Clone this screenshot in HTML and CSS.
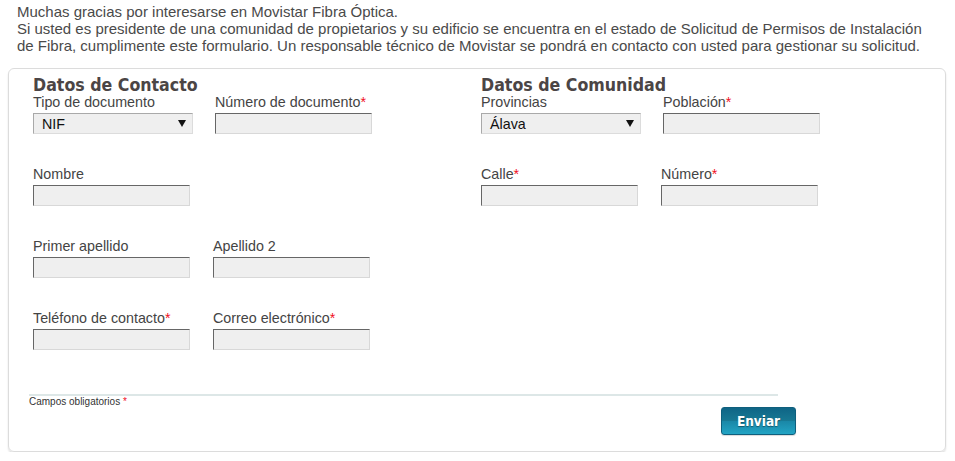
FILE: index.html
```html
<!DOCTYPE html>
<html lang="es">
<head>
<meta charset="utf-8">
<title>Movistar Fibra Óptica</title>
<link rel="stylesheet" href="styles.css">
</head>
<body>
<div class="intro">
  Muchas gracias por interesarse en Movistar Fibra Óptica.<br>
  Si usted es presidente de una comunidad de propietarios y su edificio se encuentra en el estado de Solicitud de Permisos de Instalación de Fibra, cumplimente este formulario. Un responsable técnico de Movistar se pondrá en contacto con usted para gestionar su solicitud.
</div>
<form class="card">
  <div class="columns">
    <section class="col">
      <h2 class="title">Datos de Contacto</h2>
      <div class="row">
        <div class="field field-wide">
          <label class="lbl">Tipo de documento</label>
          <div class="select">
            <span class="select-val">NIF</span>
            <svg class="arrow" width="8" height="7" viewBox="0 0 8 7"><path d="M0 0H8L4 7Z" fill="#111"/></svg>
          </div>
        </div>
        <div class="field">
          <label class="lbl">Número de documento<span class="req">*</span></label>
          <input class="inp" type="text">
        </div>
      </div>
      <div class="row">
        <div class="field">
          <label class="lbl">Nombre</label>
          <input class="inp" type="text">
        </div>
      </div>
      <div class="row">
        <div class="field">
          <label class="lbl">Primer apellido</label>
          <input class="inp" type="text">
        </div>
        <div class="field">
          <label class="lbl">Apellido 2</label>
          <input class="inp" type="text">
        </div>
      </div>
      <div class="row">
        <div class="field">
          <label class="lbl">Teléfono de contacto<span class="req">*</span></label>
          <input class="inp" type="text">
        </div>
        <div class="field">
          <label class="lbl">Correo electrónico<span class="req">*</span></label>
          <input class="inp" type="text">
        </div>
      </div>
    </section>
    <section class="col">
      <h2 class="title">Datos de Comunidad</h2>
      <div class="row">
        <div class="field field-wide">
          <label class="lbl">Provincias</label>
          <div class="select">
            <span class="select-val">Álava</span>
            <svg class="arrow" width="8" height="7" viewBox="0 0 8 7"><path d="M0 0H8L4 7Z" fill="#111"/></svg>
          </div>
        </div>
        <div class="field">
          <label class="lbl">Población<span class="req">*</span></label>
          <input class="inp" type="text">
        </div>
      </div>
      <div class="row">
        <div class="field">
          <label class="lbl">Calle<span class="req">*</span></label>
          <input class="inp" type="text">
        </div>
        <div class="field">
          <label class="lbl">Número<span class="req">*</span></label>
          <input class="inp" type="text">
        </div>
      </div>
    </section>
  </div>
  <div class="footer">
    <div class="rule"></div>
    <div class="note">Campos obligatorios <span class="req">*</span></div>
    <div class="actions">
      <button class="btn" type="button">Enviar</button>
    </div>
  </div>
</form>
</body>
</html>
```
FILE: styles.css
```css
* { box-sizing: border-box; }
body {
  margin: 0;
  padding-top: 3px;
  font-family: "Liberation Sans", Arial, sans-serif;
  color: #444;
  background: #fff;
}
.intro {
  font-size: 15px;
  line-height: 17px;
  padding: 0 20px 0 17px;
  color: #4a4a4a;
}
.card {
  margin: 14px 0 0 8px;
  width: 938px;
  border: 1px solid #dcdcdc;
  border-radius: 6px;
  box-shadow: 0 2px 2px rgba(0, 0, 0, 0.12);
  padding: 7px 0 16px 0;
}
.columns {
  display: flex;
  padding-left: 24px;
}
.col {
  width: 448px;
}
.title {
  margin: 0;
  font-family: "DejaVu Sans Condensed", "DejaVu Sans", sans-serif;
  font-weight: bold;
  font-size: 17.6px;
  line-height: 18px;
  color: #4b4545;
}
.row {
  display: flex;
  margin-bottom: 32px;
}
.row:last-child { margin-bottom: 0; }
.field {
  display: flex;
  flex-direction: column;
  gap: 3px;
  width: 180px;
}
.field-wide { width: 182px; }
.lbl {
  font-size: 14.3px;
  line-height: 16px;
  color: #444;
  white-space: nowrap;
}
.req { color: #f0101e; }
.inp {
  display: block;
  width: 157px;
  height: 21px;
  margin: 0;
  padding: 0 4px;
  background: #efefef;
  border-style: solid;
  border-width: 1px;
  border-color: #666 #d8d8d8 #d8d8d8 #666;
  font: 14px "Liberation Sans", Arial, sans-serif;
}
.select {
  position: relative;
  display: flex;
  align-items: center;
  width: 160px;
  height: 21px;
  padding: 0 8px;
  background: #efefef;
  border: 1px solid #a9a9a9;
  border-right-color: #dcdcdc;
  border-bottom-color: #dcdcdc;
  font-size: 14.3px;
  color: #111;
}
.arrow {
  position: absolute;
  right: 6px;
  top: 6px;
}
.footer {
  margin: 44px 0 0 20px;
}
.rule {
  width: 749px;
  height: 2px;
  background: #dde7e7;
}
.note {
  font-size: 10px;
  line-height: 11px;
  color: #333;
}
.actions {
  width: 767px;
  display: flex;
  justify-content: flex-end;
}
.btn {
  width: 75px;
  height: 28px;
  border: 1px solid #0f5f7d;
  border-radius: 3px;
  background: linear-gradient(to bottom, #0f6586 0%, #177893 48%, #1a88a8 52%, #22a4c4 100%);
  color: #fff;
  font-family: "DejaVu Sans Condensed", "DejaVu Sans", sans-serif;
  font-weight: bold;
  font-size: 13.5px;
  text-shadow: 0 1px 1px rgba(0, 0, 0, 0.4);
  box-shadow: 0 1px 1px rgba(0, 0, 0, 0.15);
  padding: 0;
}
```
